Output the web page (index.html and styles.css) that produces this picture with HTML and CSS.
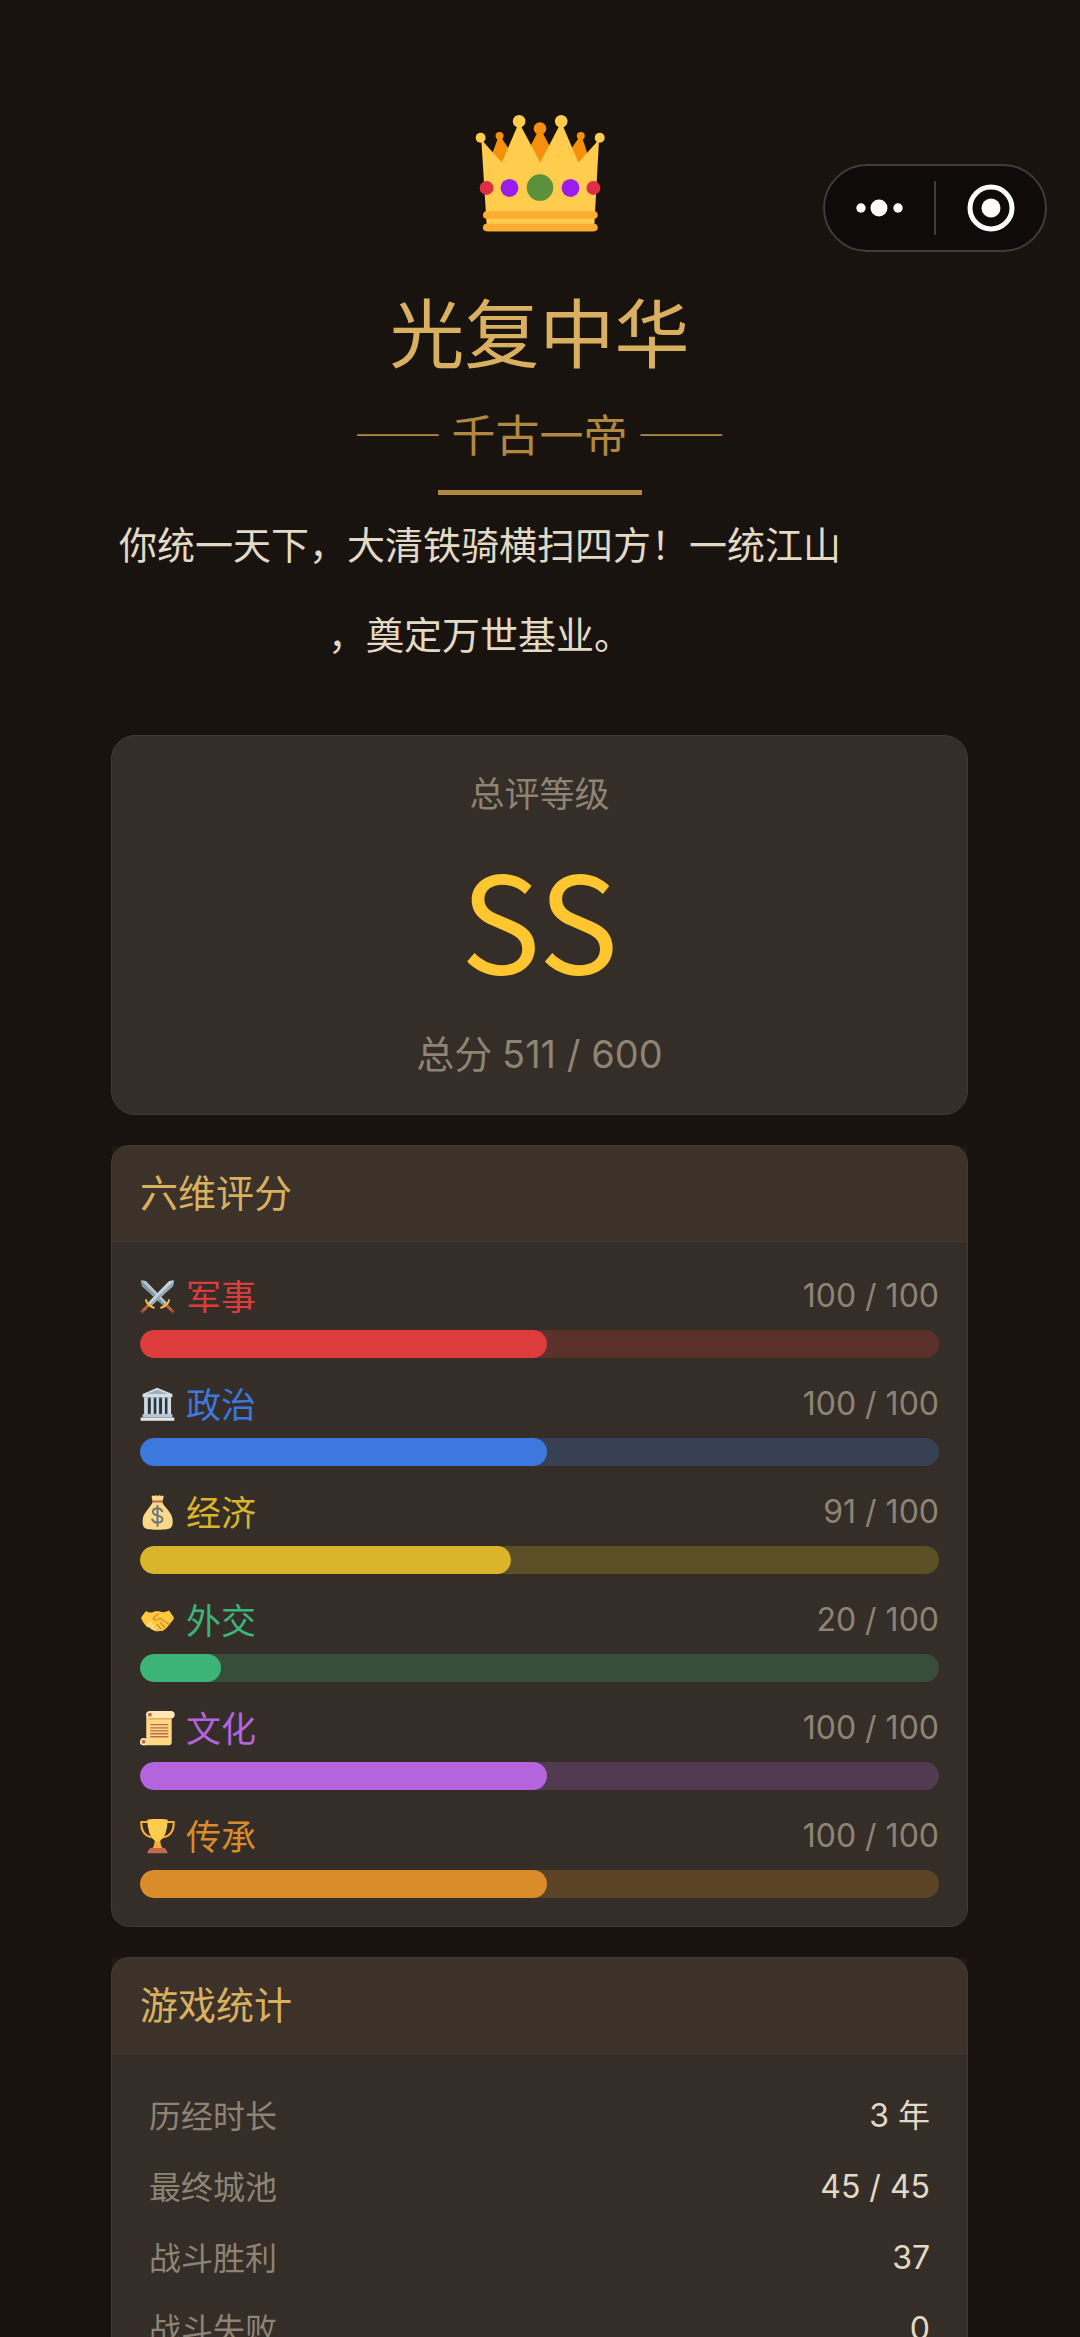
FILE: index.html
```html
<!DOCTYPE html>
<html lang="zh-CN">
<head>
<meta charset="utf-8">
<meta name="viewport" content="width=device-width, initial-scale=1">
<title>光复中华</title>
<link rel="stylesheet" href="styles.css">
</head>
<body>
<nav class="capsule" aria-label="小程序">
  <button class="capsule-btn" type="button" aria-label="更多">
    <svg width="48" height="48" viewBox="0 0 48 48" fill="#fff"><circle cx="5" cy="24" r="4.700"/><circle cx="23" cy="24" r="8.500"/><circle cx="42" cy="24" r="4.700"/></svg>
  </button>
  <button class="capsule-btn" type="button" aria-label="关闭">
    <svg width="48" height="48" viewBox="0 0 48 48"><circle cx="24" cy="24" r="21" fill="none" stroke="#fff" stroke-width="5"/><circle cx="24" cy="24" r="9.500" fill="#fff"/></svg>
  </button>
</nav>
<main class="page">
  <header class="hero">
    <svg class="crown" viewBox="98 72 392 354" aria-hidden="true">
      <g fill="#f4900c"><circle cx="172" cy="137" r="12"/><circle cx="294" cy="115" r="19"/><circle cx="417" cy="137" r="12"/><path d="M168 142h9l22 32-10 50h-25l-14-34zM287 125h14l28 55-18 45h-34l-18-45zM412 142h9l16 48-16 34h-22l-10-50z"/></g>
      <path fill="#ffcc4d" d="M117 148L179 217 227 105h8l60 112 58-112h9l48 112 62-69-14 255v22H133v-22z"/>
      <g fill="#ffcc4d"><circle cx="115" cy="143" r="15"/><circle cx="231" cy="93" r="19"/><circle cx="358" cy="93" r="19"/><circle cx="474" cy="143" r="15"/></g>
      <g fill="#ffac33"><rect x="122" y="364" width="346" height="23" rx="11.500"/><rect x="122" y="402" width="346" height="23" rx="11.500"/></g>
      <circle cx="294" cy="293" r="40" fill="#5c913b"/>
      <circle cx="202" cy="294" r="27" fill="#9a1ded"/><circle cx="386" cy="294" r="27" fill="#9a1ded"/>
      <circle cx="133" cy="294" r="21" fill="#dd2e44"/><circle cx="455" cy="294" r="21" fill="#dd2e44"/>
    </svg>
    <h1 class="title">光复中华</h1>
    <p class="subtitle">—— 千古一帝 ——</p>
    <div class="rule"></div>
    <p class="story"><span>你统一天下，大清铁骑横扫四方！一统江山</span><span>，奠定万世基业。</span></p>
  </header>

  <section class="card grade">
    <h2 class="grade-label">总评等级</h2>
    <p class="grade-value">SS</p>
    <p class="grade-total">总分 <span class="num">511 / 600</span></p>
  </section>

  <section class="card panel">
    <h2 class="card-head">六维评分</h2>
    <ul class="scores">
      <li class="score military">
        <div class="score-line">
          <svg class="icon" viewBox="0 0 106 106" aria-hidden="true">
            <path fill="#b4c4cf" d="M3 4l15 2 64 66-10 10L6 21z"/><path fill="#8297a5" d="M4 5l74 73-6 4L6 21z"/>
            <path fill="#c3d2dc" d="M103 4L88 6 24 72l10 10 66-61z"/><path fill="#94a8b5" d="M103 5L29 78l5 4 66-61z"/>
            <path d="M29 76L8 97M77 76l21 21" stroke="#b5653f" stroke-width="9"/>
            <path d="M18 64q4 15 24 23M88 64q-4 15-24 23" fill="none" stroke="#ffbf36" stroke-width="6" stroke-linecap="round"/>
            <g fill="#9b4d2a"><circle cx="7" cy="98" r="5"/><circle cx="99" cy="98" r="5"/></g>
          </svg>
          <span class="score-name">军事</span><span class="score-num">100 / 100</span>
        </div>
        <div class="track"><div class="fill" style="width:51%"></div></div>
      </li>
      <li class="score politics">
        <div class="score-line">
          <svg class="icon" viewBox="0 0 106 106" aria-hidden="true">
            <path fill="#d4dde3" d="M52 2L98 21v10H8V21z"/><path fill="#9db0bc" d="M52 8L85 21H20z"/>
            <path fill="#8b9da9" d="M12 31h82v52H12z"/>
            <path fill="#28343e" d="M24 34h9v47h-9zM41 34h9v47h-9zM58 34h9v47h-9zM75 34h8v47h-8z"/>
            <path fill="#cfdae2" d="M13 31h10v52H13zM33 31h8v52h-8zM50 31h7v52h-7zM67 31h8v52h-8zM84 31h10v52H84z"/>
            <path fill="#b9c8d2" d="M8 82h90v10H8z"/><path fill="#e1e8ed" d="M2 92h102v10H2z"/>
          </svg>
          <span class="score-name">政治</span><span class="score-num">100 / 100</span>
        </div>
        <div class="track"><div class="fill" style="width:51%"></div></div>
      </li>
      <li class="score economy">
        <div class="score-line">
          <svg class="icon" viewBox="0 0 106 106" aria-hidden="true">
            <path fill="#fdd888" d="M35 5q3-6 8-2 5-4 10 0 5-4 10 0 5-4 9 2l-5 16q3 8 14 20c12 14 18 24 18 37 0 11-1 18-7 22-5 4-14 5-39 5s-33-1-38-5c-7-5-7-12-7-22 0-14 6-22 17-36q10-13 14-21z"/>
            <path fill="#bf6952" d="M38 17h29q5 3 0 6H38q-5-3 0-6z"/>
            <path d="M67 49c-3-7-9-9-14-9-8 0-14 4-14 11 0 16 29 7 29 22 0 7-6 11-15 11-7 0-13-3-16-10M53 33v61" fill="none" stroke="#67757f" stroke-width="6" stroke-linecap="round"/>
          </svg>
          <span class="score-name">经济</span><span class="score-num">91 / 100</span>
        </div>
        <div class="track"><div class="fill" style="width:46.410%"></div></div>
      </li>
      <li class="score diplomacy">
        <div class="score-line">
          <svg class="icon" viewBox="0 0 106 106" aria-hidden="true">
            <path fill="#ffc83f" d="M18 24q12 8 26 2 8-3 16 0 12 5 28-3l15 22q-1 8-10 15l-14 17q-10 9-20 8-9 3-15-2-9 0-14-8-9 0-13-7-9-9-14-23z"/>
            <path d="M55 33L40 46q3 9 14 4l8-4 27 20M62 60l13 14M52 65l11 14M43 70l8 13" fill="none" stroke="#d58d24" stroke-width="4" stroke-linecap="round" stroke-linejoin="round"/>
            <g fill="#ffe08a"><ellipse cx="29" cy="64" rx="5" ry="8" transform="rotate(38 29 64)"/><ellipse cx="38" cy="72" rx="5" ry="8" transform="rotate(38 38 72)"/><ellipse cx="47" cy="78" rx="4" ry="7" transform="rotate(38 47 78)"/></g>
          </svg>
          <span class="score-name">外交</span><span class="score-num">20 / 100</span>
        </div>
        <div class="track"><div class="fill" style="width:10.200%"></div></div>
      </li>
      <li class="score culture">
        <div class="score-line">
          <svg class="icon" viewBox="0 0 106 106" aria-hidden="true">
            <path fill="#ffd983" d="M19 18h77v77q0 9-9 9H10V84h9z"/>
            <path fill="#ffe8b6" d="M29 0h67q9 2 9 11t-9 11H29q-11-2-11-11T29 0zM10 82q11 0 11 11t-11 11-10-11 10-11z"/>
            <path fill="#e39f3d" d="M29 22h67v4H24z"/>
            <circle cx="30" cy="11" r="6" fill="#c1694f"/><circle cx="11" cy="93" r="6" fill="#c1694f"/>
            <path d="M31 41h55M31 51h55M31 60h55M31 69h55M31 78h55" stroke="#c1694f" stroke-width="4"/>
          </svg>
          <span class="score-name">文化</span><span class="score-num">100 / 100</span>
        </div>
        <div class="track"><div class="fill" style="width:51%"></div></div>
      </li>
      <li class="score legacy">
        <div class="score-line">
          <svg class="icon" viewBox="0 0 106 106" aria-hidden="true">
            <path d="M25 9H4q-2 39 31 46M81 9h21q2 39-31 46" fill="none" stroke="#ffac33" stroke-width="6"/>
            <path fill="#ffcc4d" d="M22 2q31-5 62 0-2 51-23 64 0 15 7 22H38q7-7 7-22Q24 53 22 2z"/>
            <path fill="#ffac33" d="M45 66q8 4 16 0 0 15 7 22H38q7-7 7-22z"/>
            <path fill="#c1694f" d="M31 88h44q7 5 9 16H22q2-11 9-16z"/>
          </svg>
          <span class="score-name">传承</span><span class="score-num">100 / 100</span>
        </div>
        <div class="track"><div class="fill" style="width:51%"></div></div>
      </li>
    </ul>
  </section>

  <section class="card panel">
    <h2 class="card-head">游戏统计</h2>
    <dl class="stats">
      <div class="stat"><dt>历经时长</dt><dd>3 年</dd></div>
      <div class="stat"><dt>最终城池</dt><dd>45 / 45</dd></div>
      <div class="stat"><dt>战斗胜利</dt><dd>37</dd></div>
      <div class="stat"><dt>战斗失败</dt><dd>0</dd></div>
    </dl>
  </section>
</main>
</body>
</html>
```
FILE: styles.css
```css
* {
  box-sizing: border-box;
}

body,
h1,
h2,
p,
ul,
dl,
dd {
  margin: 0;
  padding: 0;
}

body {
  background: #19130f;
  color: #e3dac6;
  font-family: Lato, "Noto Sans CJK SC", sans-serif;
}

h1,
h2 {
  font-weight: 400;
}

ul {
  list-style: none;
}

/* The page scrolls under the floating capsule */
.page {
  display: flex;
  flex-direction: column;
  gap: 30px;
  height: 100vh;
  padding: 114px 112px 0 111px;
  overflow-y: auto;
  scrollbar-width: none;
}

.page > * {
  flex-shrink: 0;
}

.capsule {
  position: fixed;
  top: 164px;
  right: 33px;
  display: flex;
  width: 224px;
  height: 88px;
  padding: 15px 0;
  background: #0e0b0a;
  border: 2px solid #403c3a;
  border-radius: 44px;
}

.capsule-btn {
  display: flex;
  flex: 1;
  align-items: center;
  justify-content: center;
  padding: 0;
  background: none;
  border: 0;
}

.capsule-btn + .capsule-btn {
  border-left: 2px solid #403c3a;
}

.hero {
  display: flex;
  flex-direction: column;
  align-items: center;
  padding-bottom: 26px;
}

.crown {
  width: 130px;
  height: 118px;
}

.title {
  margin-top: 51px;
  color: #d9b060;
  font-size: 75px;
  line-height: 100px;
}

.subtitle {
  margin-top: 22px;
  color: #b08840;
  font-family: "Noto Sans CJK SC", sans-serif;
  font-size: 44px;
  line-height: 56px;
}

.rule {
  width: 204px;
  height: 5px;
  margin-top: 29px;
  background: #b08840;
}

.story {
  align-self: flex-start;
  width: 19em;
  margin: 4px 0 0 8px;
  font-size: 38px;
  line-height: 90px;
  text-align: center;
}

.story span {
  display: block;
}

.card {
  background: #352d27;
  border: 1px solid #433a31;
  border-radius: 24px;
}

.grade {
  display: flex;
  flex-direction: column;
  align-items: center;
  padding: 32px 0 34px;
  color: #8d8474;
}

.grade-label {
  font-size: 35px;
  line-height: 50px;
}

.grade-value {
  margin: 20px 0 32px;
  color: #ffc62f;
  font-family: "Noto Sans CJK SC", sans-serif;
  font-size: 134px;
  line-height: 156px;
}

.grade-total {
  font-size: 38px;
  line-height: 54px;
}

.num {
  font-family: Inter, sans-serif;
  line-height: 1;
}

.panel {
  border-radius: 18px;
}

.card-head {
  padding: 19px 28px 22px;
  background: rgba(200, 150, 70, 0.05);
  border-bottom: 1px solid #40372e;
  color: #d9b060;
  font-size: 38px;
  line-height: 54px;
}

.scores {
  display: flex;
  flex-direction: column;
  gap: 21px;
  padding: 29px 28px 28px;
}

.score-line {
  display: flex;
  align-items: center;
  font-size: 35px;
  line-height: 50px;
}

.icon {
  width: 35px;
  height: 35px;
  margin-right: 11px;
}

.score-name {
  flex: 1;
  color: var(--tone);
}

.score-num {
  color: #8d8474;
  font-family: Inter, sans-serif;
  font-size: 32px;
}

.track {
  height: 28px;
  margin-top: 9px;
  overflow: hidden;
  background: var(--track);
  border-radius: 14px;
}

.fill {
  height: 100%;
  background: var(--tone);
  border-radius: 14px;
}

.military {
  --tone: #dd3c3c;
  --track: #5c312c;
}

.politics {
  --tone: #3c78dd;
  --track: #384053;
}

.economy {
  --tone: #dab42a;
  --track: #5c4f25;
}

.diplomacy {
  --tone: #3cb478;
  --track: #384d3a;
}

.culture {
  --tone: #b464dd;
  --track: #523a50;
}

.legacy {
  --tone: #da8c2a;
  --track: #5b4426;
}

.stats {
  padding: 26px 37px;
}

.stat {
  display: flex;
  justify-content: space-between;
  font-size: 32px;
  line-height: 71px;
}

.stat dt {
  color: #8d8474;
}

.stat dd {
  font-family: Inter, "Noto Sans CJK SC", sans-serif;
}
```
